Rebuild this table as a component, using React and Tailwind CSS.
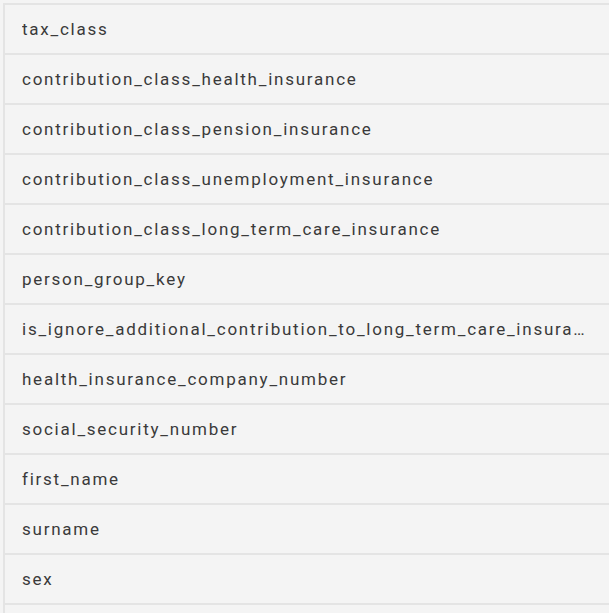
const fields = [
  'tax_class',
  'contribution_class_health_insurance',
  'contribution_class_pension_insurance',
  'contribution_class_unemployment_insurance',
  'contribution_class_long_term_care_insurance',
  'person_group_key',
  'is_ignore_additional_contribution_to_long_term_care_insurance',
  'health_insurance_company_number',
  'social_security_number',
  'first_name',
  'surname',
  'sex',
];

export default function App() {
  return (
    <div className="w-[609px] h-[613px] overflow-hidden bg-[#f4f4f4] pt-[3px] pl-[3px] font-['Roboto',sans-serif]">
      <div className="h-[700px] border-l-2 border-t-2 border-[#e4e4e4]">
        {fields.map((f) => (
          <div
            key={f}
            className="h-[50px] flex items-center pl-[17px] pr-[18px] pt-[2px] border-b-2 border-[#e4e4e4] text-[17px] tracking-[1.75px] text-[#3a3a3a]"
          >
            <span className="truncate">{f}</span>
          </div>
        ))}
      </div>
    </div>
  );
}
